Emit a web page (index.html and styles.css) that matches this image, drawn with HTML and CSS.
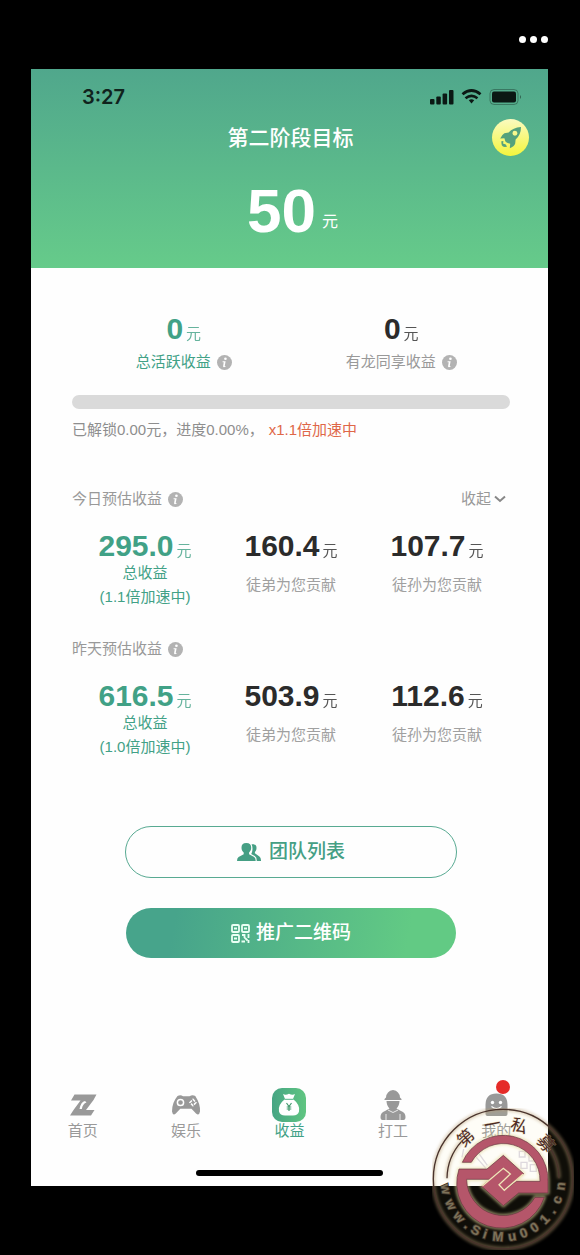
FILE: index.html
```html
<!DOCTYPE html>
<html lang="zh-CN">
<head>
<meta charset="utf-8">
<meta name="viewport" content="width=device-width, initial-scale=1">
<title>收益</title>
<link rel="stylesheet" href="styles.css">
</head>
<body>
<svg class="defs" width="0" height="0" aria-hidden="true">
  <defs>
    <symbol id="info" viewBox="0 0 16 16">
      <circle cx="8" cy="8" r="8" fill="#b3b3b3"/>
      <circle cx="9" cy="4" r="1.4" fill="#fff"/>
      <path d="M6 6.6h3.2L8.3 11.4q-.1.7.9.3l-.2.9q-2.8 1-2.5-1L7.200 7.600H5.900z" fill="#fff"/>
    </symbol>
  </defs>
</svg>
<div class="stage">
  <div class="viewer-bar">
    <button class="more" type="button" aria-label="更多"><i></i><i></i><i></i></button>
  </div>

  <div class="phone">
    <header class="hero">
      <div class="status">
        <span class="time">3:27</span>
        <svg class="status-icons" viewBox="0 0 92 18" aria-hidden="true">
          <g fill="#0b1814">
            <rect x="0" y="11" width="4.500" height="5.500" rx="1"/>
            <rect x="6.300" y="8.500" width="4.500" height="8" rx="1"/>
            <rect x="12.600" y="5.500" width="4.500" height="11" rx="1"/>
            <rect x="19" y="2" width="4.500" height="14.500" rx="1"/>
            <rect x="62" y="3.500" width="24" height="11" rx="2"/>
            <path d="M90 7q2 2 0 4z" opacity=".5"/>
            <path d="M38.800 12.200q2.700-1.900 5.400 0l-2.700 3.200z"/>
          </g>
          <g fill="none" stroke="#0b1814">
            <path d="M32.500 6.300q9-7.600 18 0" stroke-width="2.800"/>
            <path d="M35.500 10.200q6-4.800 12 0" stroke-width="2.600"/>
            <rect x="60" y="1.500" width="28" height="15" rx="4" opacity=".35"/>
          </g>
        </svg>
      </div>
      <div class="title-row">
        <h1>第二阶段目标</h1>
        <button class="boost" type="button" aria-label="加速">
          <svg viewBox="0 0 37 37" aria-hidden="true">
            <path fill="#55a27c" fill-rule="evenodd" d="M29 8q-8 .6-12.400 5.600l-4.200.6q-2.800 1.800-4.200 5.200l4.200-.2 1 3.200 1.600 1.400 3.200 1-.4 4.400q4.400-1.800 5.400-4.800l.4-3.800Q29 15.800 29 8zm-6 3.800a2.500 2.500 0 1 1-.1 5 2.500 2.500 0 0 1 .1-5z"/>
            <path fill="#55a27c" d="M9.500 22l2 .2-.5 2.300 2.800 1 1.200 2.200-2.200.3Q8.500 27.500 9.500 22z"/>
          </svg>
        </button>
      </div>
      <p class="goal"><strong>50</strong><span>元</span></p>
    </header>

    <main class="content">
      <section class="totals">
        <div class="total accent">
          <p class="amount"><strong>0</strong><span>元</span></p>
          <p class="caption">总活跃收益<svg class="info"><use href="#info"/></svg></p>
        </div>
        <div class="total">
          <p class="amount"><strong>0</strong><span>元</span></p>
          <p class="caption">有龙同享收益<svg class="info"><use href="#info"/></svg></p>
        </div>
      </section>
      <div class="progress" role="progressbar" aria-label="进度" aria-valuenow="0" aria-valuemin="0" aria-valuemax="100"></div>
      <p class="progress-note">已解锁0.00元，进度0.00%，<span>x1.1倍加速中</span></p>

      <section class="report">
        <div class="report-head">
          <h2>今日预估收益<svg class="info"><use href="#info"/></svg></h2>
          <button class="fold" type="button">收起<svg viewBox="0 0 14 10" aria-hidden="true"><path d="M2 2.500l5 4.500 5-4.500" fill="none" stroke="#888" stroke-width="2"/></svg></button>
        </div>
        <div class="figures">
          <div class="figure accent">
            <p class="amount"><strong>295.0</strong><span>元</span></p>
            <p class="label">总收益<br>(1.1倍加速中)</p>
          </div>
          <div class="figure">
            <p class="amount"><strong>160.4</strong><span>元</span></p>
            <p class="label">徒弟为您贡献</p>
          </div>
          <div class="figure">
            <p class="amount"><strong>107.7</strong><span>元</span></p>
            <p class="label">徒孙为您贡献</p>
          </div>
        </div>
      </section>

      <section class="report">
        <div class="report-head">
          <h2>昨天预估收益<svg class="info"><use href="#info"/></svg></h2>
        </div>
        <div class="figures">
          <div class="figure accent">
            <p class="amount"><strong>616.5</strong><span>元</span></p>
            <p class="label">总收益<br>(1.0倍加速中)</p>
          </div>
          <div class="figure">
            <p class="amount"><strong>503.9</strong><span>元</span></p>
            <p class="label">徒弟为您贡献</p>
          </div>
          <div class="figure">
            <p class="amount"><strong>112.6</strong><span>元</span></p>
            <p class="label">徒孙为您贡献</p>
          </div>
        </div>
      </section>

      <div class="actions">
        <button class="action outline" type="button">
          <svg class="team" viewBox="0 0 24 20" aria-hidden="true">
            <path fill="#459f84" d="M9.300 1c3.400 0 5 2 4.900 4.800 0 2-.9 3.600-2.100 4.700v1.800l5.100 2.700q1.500.8 1.500 4H0q0-3.200 1.600-4L6.700 12.300v-1.800C5.400 9.400 4.500 7.800 4.500 5.800 4.400 3 5.900 1 9.300 1z"/>
            <path fill="#459f84" d="M14.600 2.200c3.800-.5 5.100 1.600 4.900 4-.1 1.600-.7 2.900-1.600 3.700v1.300l4.500 3.400q1.700 1.200 1.600 4.400h-4.200q0-3.700-2-4.900l-3.600-2.200c1.200-2 2-6 .4-9.700z"/>
          </svg>团队列表
        </button>
        <button class="action filled" type="button">
          <svg class="qr" viewBox="0 0 19 19" aria-hidden="true">
            <g fill="none" stroke="#eafff4" stroke-width="1.800">
              <rect x="1" y="1" width="7" height="7" rx="1"/><rect x="11" y="1" width="7" height="7" rx="1"/><rect x="1" y="11" width="7" height="7" rx="1"/>
              <path d="M3 4.500h3M13 4.500h3M3 14.500h3M11 11h2.500v2.500l3 3M17.500 10v4M10.500 17.500h3.500M17.500 16v3"/>
            </g>
          </svg>推广二维码
        </button>
      </div>
    </main>

    <nav class="tabs">
      <a href="#home">
        <svg viewBox="0 0 34 34" aria-hidden="true">
          <path fill="#999" fill-rule="evenodd" d="M8.500 6.500h22l-3 5.500-7.500 10h8.500l-3.500 5.500H4l3.500-5.500 7-9.500H5zM19 13q-4 .5-5.500 8h2.300q1-5.500 4.700-6.500z"/>
        </svg>首页</a>
      <a href="#games">
        <svg viewBox="0 0 34 34" aria-hidden="true">
          <path fill="#999" d="M8.500 8q3-1.800 5.500.2h6.500q3-2 5.800-.2 5.200 8 4.700 15.500-.8 4.500-4 2l-4.500-4.700H11.300l-4.500 4.700q-3 2.500-3.800-2Q3 14.500 8.500 8z"/>
          <circle cx="11.500" cy="14.500" r="3.100" fill="none" stroke="#fff" stroke-width="1.500"/>
          <path d="M24 11.300l3 3.200-3 3.200-3-3.200z" fill="none" stroke="#fff" stroke-width="1.500" stroke-dasharray="3 1.300"/>
        </svg>娱乐</a>
      <a class="current" href="#income" aria-current="page">
        <svg viewBox="0 0 34 34" aria-hidden="true">
          <defs><linearGradient id="bag" x1="0" x2="1"><stop stop-color="#46a584"/><stop offset="1" stop-color="#60c581"/></linearGradient></defs>
          <rect width="34" height="34" rx="10" fill="url(#bag)"/>
          <path fill="#fff" d="M11 6q2.500 1.500 6-.2 3.500 1.700 6 .2l-2 5q7.500 6 6 12.500-1 4-6 4h-8q-5 0-6-4Q5.500 17 13 11z"/>
          <path d="M12.500 11.300h9" stroke="#52b385"/>
          <path d="M14.500 15l2.500 3.500 2.500-3.500M17 18.500V23M14.700 19h4.600M14.700 21h4.600" fill="none" stroke="#459b70" stroke-width="1.200"/>
        </svg>收益</a>
      <a href="#work">
        <svg viewBox="0 0 34 34" aria-hidden="true">
          <path fill="#999" d="M10 9.500q.5-6.500 7-7.500 6.500 1 7 7.500l1.500 1.500v1h-17v-1zM10.500 13h13q-.2 5-3 7.500l4.500 2.500q4.500 1.500 4.500 6 0 3-2 3h-21q-2 0-2-3 0-4.500 4.500-6l4.500-2.500q-2.800-2.500-3-7.500z"/>
          <path d="M12 22l5 2.500 5-2.500M10 26v6M24 26v6" fill="none" stroke="#fff" stroke-width=".8"/>
        </svg>打工</a>
      <a href="#me">
        <svg viewBox="0 0 34 34" aria-hidden="true">
          <path fill="#999" d="M6.500 17Q6.500 5.500 17.500 5.500t11 11.500v9q0 2-2 2h-18q-2 0-2-2z"/>
          <circle cx="13.500" cy="14.500" r="1.700" fill="#fff"/><circle cx="21.500" cy="14.500" r="1.700" fill="#fff"/>
          <path d="M12.500 18.500q5 4 10 0" fill="none" stroke="#fff" stroke-width="1.200"/>
        </svg>我的<i class="dot"></i></a>
    </nav>
    <div class="home-bar"></div>
  </div>

  <svg class="seal" viewBox="23 115 426 426" role="img" aria-label="第一私募 www.SiMu001.cn">
    <defs>
      <filter id="glow" x="-20%" y="-20%" width="140%" height="140%"><feGaussianBlur stdDeviation="4"/></filter>
      <g id="rings" fill="none">
        <circle cx="236" cy="328" r="209"/>
        <path d="M68 326A168 168 0 0 1 112 215M358 212A168 168 0 0 1 404 326"/>
      </g>
      <g id="mark">
        <path d="M114 278A134 134 0 0 1 371 335V370H283L237 408L172 350L237 296L258 313L224 345L240 362L276 335H347A110 110 0 0 0 141 278Z"/>
        <path d="M104 298H188L237 257L298 312L240 362L224 345L258 313L237 296L197 329H127A110 110 0 0 0 332 383H360A134 134 0 0 1 104 298Z"/>
      </g>
    </defs>
    <circle cx="236" cy="328" r="209" fill="#ffe68c" fill-opacity=".06"/>
    <g fill="none" stroke="#b8aebe" stroke-opacity=".45" stroke-width="4">
      <path d="M118 238l-5 25M143 248l42 48M159 245l30 42"/>
      <path d="M285 245h17v17h-17zM314 254h20v20h-20zM290 278h18v18h-18zM318 285h18v20h-18z"/>
    </g>
    <use href="#rings" stroke="#b59a70" stroke-width="12" opacity=".45" filter="url(#glow)"/>
    <use href="#rings" stroke="#49332c" stroke-width="4"/>
    <use href="#mark" fill="none" stroke="#e4d79b" stroke-width="8" opacity=".75" filter="url(#glow)"/>
    <use href="#mark" fill="#b5566a" stroke="#63333e" stroke-width="2"/>
    <path d="M174 349L237 296L258 313L224 345L240 362L296 314" fill="none" stroke="#f3e8ba" stroke-width="4"/>
    <g class="seal-cn">
      <text x="236" y="179" transform="rotate(-42 236 328)">第</text>
      <text x="236" y="179" transform="rotate(-11 236 328)">一</text>
      <text x="236" y="179" transform="rotate(17 236 328)">私</text>
      <text x="236" y="179" transform="rotate(50 236 328)">募</text>
    </g>
    <g class="seal-url">
      <text x="236" y="515" transform="rotate(80 236 328)">w</text>
      <text x="236" y="515" transform="rotate(64 236 328)">w</text>
      <text x="236" y="515" transform="rotate(49 236 328)">w</text>
      <text x="236" y="515" transform="rotate(38 236 328)">.</text>
      <text x="236" y="515" transform="rotate(28 236 328)">S</text>
      <text x="236" y="515" transform="rotate(18 236 328)">i</text>
      <text x="236" y="515" transform="rotate(5 236 328)">M</text>
      <text x="236" y="515" transform="rotate(-9 236 328)">u</text>
      <text x="236" y="515" transform="rotate(-21 236 328)">0</text>
      <text x="236" y="515" transform="rotate(-33 236 328)">0</text>
      <text x="236" y="515" transform="rotate(-46 236 328)">1</text>
      <text x="236" y="515" transform="rotate(-57 236 328)">.</text>
      <text x="236" y="515" transform="rotate(-69 236 328)">c</text>
      <text x="236" y="515" transform="rotate(-83 236 328)">n</text>
    </g>
  </svg>
</div>
</body>
</html>
```
FILE: styles.css
```css
* { box-sizing: border-box; }
body {
  margin: 0;
  background: #000;
  color: #2b2b2b;
  font-family: "Liberation Sans", "Noto Sans CJK SC", sans-serif;
  font-size: 15px;
  line-height: 20px;
}
h1, h2, p { margin: 0; font-weight: 400; }
button { margin: 0; padding: 0; border: 0; background: none; font: inherit; color: inherit; }
svg { display: block; flex: none; }
.defs { position: absolute; }

.stage { position: relative; padding: 0 32px 69px 31px; }
.viewer-bar { display: flex; justify-content: flex-end; align-items: center; height: 69px; padding-top: 9px; }
.more { display: flex; gap: 4px; }
.more i { width: 7px; height: 7px; border-radius: 50%; background: #fff; }

.phone { padding-bottom: 10px; background: #fefefe; }
.hero { padding-bottom: 22px; background: linear-gradient(#50a78c, #66cb8a); color: #fff; }
.status { display: flex; justify-content: space-between; align-items: center; height: 50px; padding: 6px 26px 0 51px; }
.time { font-family: Inter, sans-serif; font-size: 20px; font-weight: 600; color: #10231d; }
.status-icons { width: 92px; height: 18px; }
.title-row { display: grid; grid-template-columns: 1fr auto 1fr; align-items: center; padding: 0 19px 0 21px; }
.title-row h1 { grid-column: 2; font-size: 21px; line-height: 28px; font-weight: 500; }
.boost { justify-self: end; width: 37px; height: 37px; border-radius: 50%; background: linear-gradient(#fbfbc0, #f3f53c); }
.goal { display: flex; justify-content: center; align-items: flex-end; gap: 6px; margin-top: 20px; padding-left: 6px; line-height: 70px; }
.goal strong { font-size: 62px; }
.goal span { padding-bottom: 14px; font-size: 16px; line-height: 20px; }

.content { padding: 44px 38px 0 41px; }
.totals { display: grid; grid-template-columns: 1fr 1fr; padding-left: 3px; }
.amount { display: flex; justify-content: center; align-items: baseline; gap: 3px; line-height: 30px; }
.amount strong { font-size: 30px; }
.amount span { font-size: 15px; line-height: 20px; opacity: .8; }
.total .amount { line-height: 34px; }
.caption { display: flex; justify-content: center; align-items: center; gap: 6px; margin-top: 6px; color: #999; }
.info { width: 15px; height: 15px; }
.accent, .accent .caption, .accent .label { color: #41a186; }
.progress { height: 14px; margin-top: 23px; border-radius: 7px; background: #dadada; }
.progress-note { margin-top: 11px; color: #8e8e8e; }
.progress-note span { margin-left: 5px; color: #df6748; }

.report { margin-top: 30px; }
.progress-note + .report { margin-top: 49px; }
.report-head { display: flex; justify-content: space-between; color: #999; }
.report-head h2 { display: flex; align-items: center; gap: 6px; font-size: 15px; }
.fold { display: flex; align-items: center; gap: 2px; padding-right: 3px; }
.fold svg { width: 14px; height: 10px; }
.figures { display: grid; grid-template-columns: repeat(3, 1fr); margin-top: 22px; text-align: center; }
.label { display: grid; align-content: center; min-height: 48px; line-height: 24px; color: #a0a0a0; }

.actions { display: grid; gap: 30px; margin-top: 67px; padding: 0 53px; }
.action { display: flex; justify-content: center; align-items: center; gap: 8px; border-radius: 26px; font-size: 19px; font-weight: 500; }
.outline { height: 52px; border: 1px solid #58aa92; color: #459f84; }
.filled { height: 50px; margin: 0 1px; gap: 6px; background: linear-gradient(100deg, #47a48b 15%, #62ca84 85%); color: #fff; }
.team { width: 24px; height: 20px; }
.qr { width: 19px; height: 19px; }

.tabs { display: grid; grid-template-columns: repeat(5, 1fr); margin-top: 130px; }
.tabs a { position: relative; display: grid; justify-items: center; color: #999; text-decoration: none; line-height: 18px; }
.tabs svg { width: 34px; height: 34px; }
.tabs .current { color: #41a186; }
.dot { position: absolute; top: -8px; left: 50%; width: 14px; height: 14px; border-radius: 50%; background: #e52b28; }
.home-bar { width: 36%; height: 6px; margin: 30px auto 0; border-radius: 3px; background: #000; }

.seal { position: absolute; right: 6px; bottom: 5px; width: 142px; height: 142px; pointer-events: none; }
.seal text { text-anchor: middle; paint-order: stroke; }
.seal-cn { font-family: "Noto Sans CJK SC", sans-serif; font-size: 50px; fill: #4c2922; stroke: #d8c79c; stroke-opacity: .4; stroke-width: 4px; }
.seal-url { font-family: "Liberation Sans", sans-serif; font-size: 40px; font-weight: 700; fill: #7c7158; stroke: #3f3328; stroke-width: 5px; }
```
